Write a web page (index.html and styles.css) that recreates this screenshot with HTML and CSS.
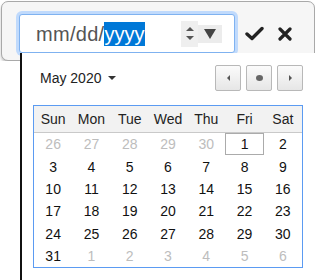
FILE: index.html
```html
<!DOCTYPE html>
<html lang="en">
<head>
    <meta charset="UTF-8">
    <title>Date editor</title>
    <link rel="stylesheet" href="styles.css">
</head>
<body>
    <div class="editor">
        <div class="date-input">
            <span class="date-text">mm/dd/<span class="selected">yyyy</span></span>
            <span class="spin">
                <span class="arrow-up"></span>
                <span class="arrow-down"></span>
            </span>
            <span class="drop"><span class="drop-arrow"></span></span>
        </div>
        <button class="icon-btn ok" title="Save">
            <svg width="19" height="15" viewBox="0 0 19 15"><path d="M2 8 L7 12.5 L17 2.5" fill="none" stroke="#222" stroke-width="3.4" stroke-linecap="round" stroke-linejoin="round"/></svg>
        </button>
        <button class="icon-btn cancel" title="Cancel">
            <svg width="14" height="14" viewBox="0 0 14 14"><path d="M2 2 L12 12 M12 2 L2 12" fill="none" stroke="#222" stroke-width="3.2" stroke-linecap="round"/></svg>
        </button>
    </div>

    <div class="picker">
        <div class="picker-head">
            <div class="month">May 2020 <span class="caret"></span></div>
            <div class="nav">
                <button class="nav-btn"><span class="tri-left"></span></button>
                <button class="nav-btn"><span class="dot"></span></button>
                <button class="nav-btn"><span class="tri-right"></span></button>
            </div>
        </div>
        <table class="cal">
            <thead>
                <tr><th>Sun</th><th>Mon</th><th>Tue</th><th>Wed</th><th>Thu</th><th>Fri</th><th>Sat</th></tr>
            </thead>
            <tbody>
                <tr><td class="other">26</td><td class="other">27</td><td class="other">28</td><td class="other">29</td><td class="other">30</td><td class="today">1</td><td>2</td></tr>
                <tr><td>3</td><td>4</td><td>5</td><td>6</td><td>7</td><td>8</td><td>9</td></tr>
                <tr><td>10</td><td>11</td><td>12</td><td>13</td><td>14</td><td>15</td><td>16</td></tr>
                <tr><td>17</td><td>18</td><td>19</td><td>20</td><td>21</td><td>22</td><td>23</td></tr>
                <tr><td>24</td><td>25</td><td>26</td><td>27</td><td>28</td><td>29</td><td>30</td></tr>
                <tr><td>31</td><td class="other">1</td><td class="other">2</td><td class="other">3</td><td class="other">4</td><td class="other">5</td><td class="other">6</td></tr>
            </tbody>
        </table>
    </div>
</body>
</html>
```

FILE: styles.css
```css
/* Inline date editor with open calendar */
body {
    margin: 0;
    background: #fff;
    font-family: 'Liberation Sans', Arial, sans-serif;
    overflow: hidden;
}

.editor {
    box-sizing: border-box;
    margin: 1px 0 0 1px;
    width: 314px;
    height: 60px;
    padding: 12px 0 0 17px;
    display: flex;
    align-items: flex-start;
    background: #f6f6f6;
    border: 1px solid #a9a9a9;
    border-radius: 7px;
    box-shadow: 0 2px 3px rgba(0, 0, 0, 0.25);
}

.date-input {
    box-sizing: border-box;
    width: 216px;
    height: 39px;
    display: flex;
    align-items: center;
    padding: 0 12px 0 16px;
    background: #fff;
    border: 1px solid #7fb2f0;
    border-radius: 3px;
    box-shadow: 0 0 0 3px #c0dafc;
}

.date-text {
    font-size: 20px;
    color: #555;
    letter-spacing: 0.3px;
}

.selected {
    display: inline-block;
    line-height: 24px;
    background: #0078d7;
    color: #fff;
    letter-spacing: 0;
    padding-right: 1px;
}

.spin {
    margin-left: auto;
    width: 17px;
    height: 26px;
    background: #efefef;
    display: flex;
    flex-direction: column;
    align-items: center;
    justify-content: center;
    gap: 5px;
}

.arrow-up,
.arrow-down {
    width: 0;
    height: 0;
    border-left: 4px solid transparent;
    border-right: 4px solid transparent;
}

.arrow-up {
    border-bottom: 4px solid #555;
}

.arrow-down {
    border-top: 4px solid #555;
}

.drop {
    width: 24px;
    height: 18px;
    background: #ececec;
    display: flex;
    align-items: center;
    justify-content: center;
}

.drop-arrow {
    width: 0;
    height: 0;
    border-left: 6px solid transparent;
    border-right: 6px solid transparent;
    border-top: 10px solid #444;
}

.icon-btn {
    border: 0;
    padding: 0;
    background: transparent;
    display: flex;
    height: 39px;
    align-items: center;
}

.ok {
    margin-left: 10px;
}

.cancel {
    margin-left: 14px;
}

/* Calendar popup */
.picker {
    position: absolute;
    left: 20px;
    top: 53px;
    right: -10px;
    bottom: -10px;
    padding: 12px 0 0 11px;
    background: #fff;
    border-left: 2px solid #111;
}

.picker-head {
    width: 270px;
    height: 26px;
    display: flex;
    align-items: center;
    justify-content: space-between;
}

.month {
    margin-left: 7px;
    font-size: 14px;
    color: #222;
    display: flex;
    align-items: center;
}

.caret {
    margin-left: 7px;
    width: 0;
    height: 0;
    border-left: 4px solid transparent;
    border-right: 4px solid transparent;
    border-top: 4px solid #333;
}

.nav {
    display: flex;
    gap: 5px;
}

.nav-btn {
    box-sizing: border-box;
    width: 26px;
    height: 26px;
    padding: 0;
    display: flex;
    align-items: center;
    justify-content: center;
    background: linear-gradient(#fbfbfb, #e6e6e6);
    border: 1px solid #b8b8b8;
    border-radius: 2px;
}

.tri-left,
.tri-right {
    width: 0;
    height: 0;
    border-top: 3px solid transparent;
    border-bottom: 3px solid transparent;
}

.tri-left {
    border-right: 3px solid #555;
}

.tri-right {
    border-left: 3px solid #555;
}

.dot {
    width: 7px;
    height: 6px;
    border-radius: 50%;
    background: #666;
}

.cal {
    margin-top: 14px;
    width: 270px;
    table-layout: fixed;
    border-collapse: separate;
    border-spacing: 0;
    border: 1px solid #5b9bf2;
    font-size: 14px;
}

.cal th {
    height: 26px;
    padding: 0;
    font-weight: normal;
    color: #222;
    background: #f2f2f2;
    border-bottom: 1px solid #c9c9c9;
}

.cal td {
    height: 22.4px;
    padding: 0;
    text-align: center;
    color: #111;
}

.cal td.other {
    color: #bdbdbd;
}

.cal td.today {
    box-shadow: inset 0 0 0 1px #ababab;
}
```
